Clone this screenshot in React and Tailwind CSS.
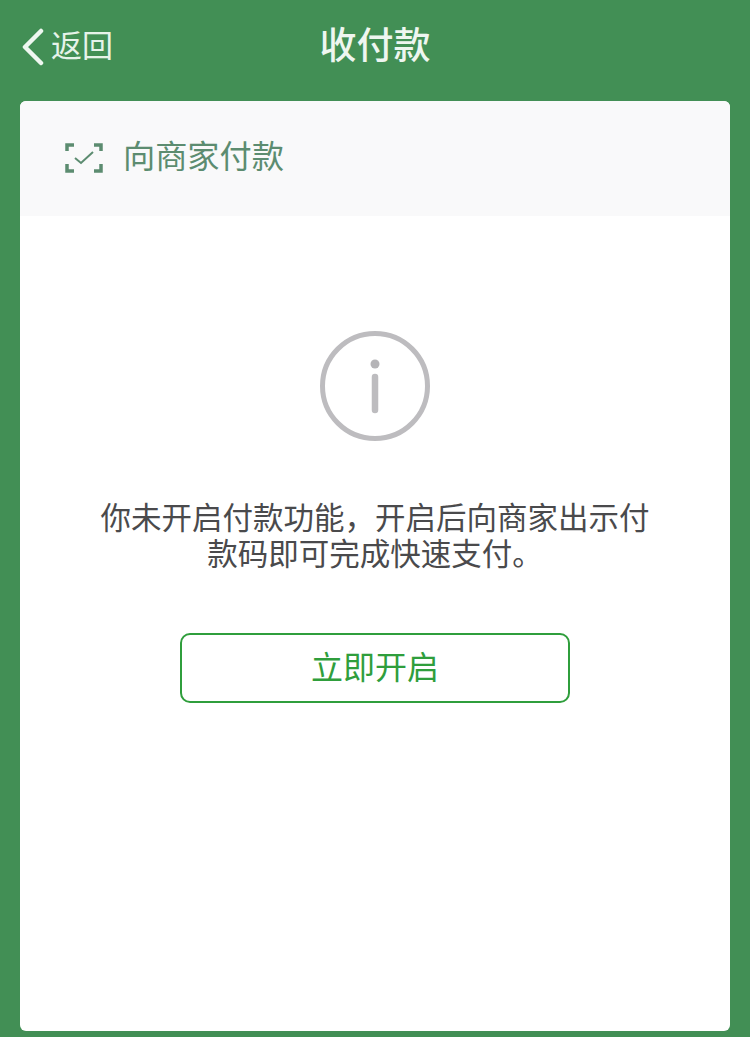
import React from "react";

const cjk = "font-['Liberation_Sans','Noto_Sans_CJK_SC',sans-serif]";

function App() {
  return (
    <div className={`flex h-[1037px] w-[750px] flex-col overflow-hidden bg-[#428f55] px-5 pb-1.5 ${cjk}`}>
      <header className="flex h-[101px] shrink-0 items-center justify-between pb-2">
        <div className="flex w-[120px] items-center gap-[5px] text-[#e6f3e9]">
          <svg width="26" height="38" viewBox="0 0 26 38" fill="none">
            <path d="M21 3 L5 19 L21 35" stroke="#eef7f0" strokeWidth="4.5" strokeLinecap="round" strokeLinejoin="round" />
          </svg>
          <span className="text-[31px] leading-none">返回</span>
        </div>
        <h1 className="text-[37px] leading-none font-medium text-[#eef6f0]">收付款</h1>
        <div className="w-[120px]" />
      </header>

      <main className="flex flex-1 flex-col rounded-md bg-white">
        <div className="flex h-[115px] shrink-0 items-center gap-5 rounded-t-md bg-[#f9f9fa] pb-[2px] pl-[45px]">
          <svg width="38" height="30" viewBox="0 0 38 30" fill="none" stroke="#5c8c70" strokeWidth="3.5">
            <path d="M9 2 H2 V8" />
            <path d="M29 2 H36 V8" />
            <path d="M9 28 H2 V21" />
            <path d="M29 28 H36 V21" />
            <path d="M10 15 L16 20 L28 9" strokeWidth="2" />
          </svg>
          <span className="text-[32.2px] leading-none text-[#5c8c70]">向商家付款</span>
        </div>

        <div className="flex flex-col items-center pt-[115px]">
          <svg width="110" height="110" viewBox="0 0 110 110" fill="none">
            <circle cx="55" cy="55" r="52.5" stroke="#bdbcbf" strokeWidth="5" />
            <circle cx="55" cy="33" r="4.5" fill="#b5b4b7" />
            <path d="M55 46 V79" stroke="#bdbcbf" strokeWidth="6.5" strokeLinecap="round" />
          </svg>

          <p className="mt-[59px] w-[560px] text-center text-[30.5px] leading-[36px] text-[#4a4a4c]">
            你未开启付款功能，开启后向商家出示付款码即可完成快速支付。
          </p>

          <button className="mt-[61px] flex h-[70px] w-[390px] items-center justify-center rounded-[10px] border-2 border-[#2f9e3c] bg-white text-[32px] leading-none text-[#2f9e3c]">
            立即开启
          </button>
        </div>
      </main>
    </div>
  );
}

export default App;
